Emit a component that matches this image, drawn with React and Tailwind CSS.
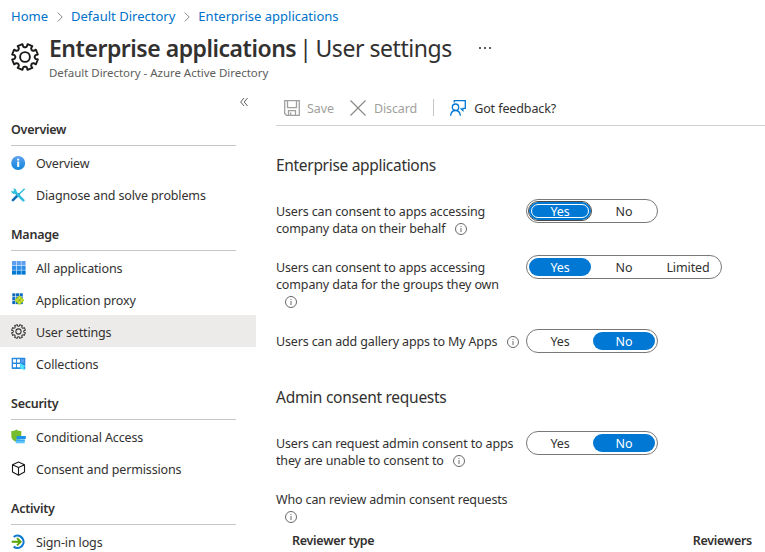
import { useId } from "react";

function Gear({ className, w }) {
  const pts = [];
  const n = 8;
  for (let i = 0; i < n; i++) {
    const c = (i * 2 * Math.PI) / n + Math.PI / 8;
    const p = (r, d) => `${(14 + r * Math.cos(c + d)).toFixed(2)},${(14 + r * Math.sin(c + d)).toFixed(2)}`;
    pts.push(p(9.7, -0.34), p(10.6, -0.22), p(13.1, -0.2), p(13.1, 0.2), p(10.6, 0.22), p(9.7, 0.34));
  }
  return (
    <svg className={className} viewBox="0 0 28 28" fill="none" stroke="currentColor" strokeWidth={w} strokeLinejoin="round">
      <polygon points={pts.join(" ")} />
      <circle cx="14" cy="14" r="4.9" />
    </svg>
  );
}

function Icon({ children }) {
  return (
    <svg className="mt-px h-4 w-4 shrink-0" viewBox="0 0 16 16" fill="none">
      {children}
    </svg>
  );
}

function OverviewIcon() {
  const id = useId();
  return (
    <Icon>
      <defs>
        <linearGradient id={id} x2="0" y2="1">
          <stop stopColor="#5ea0ef" />
          <stop offset="1" stopColor="#0f86dc" />
        </linearGradient>
      </defs>
      <circle cx="8.2" cy="8" r="7" fill={`url(#${id})`} />
      <circle cx="8.2" cy="4.7" r="1.1" fill="#fff" />
      <path d="M7.2 6.6h2v5.3h-2z" fill="#fff" />
    </Icon>
  );
}

function ToolsIcon() {
  return (
    <Icon>
      <path d="M14.6 1.8 8.2 8" stroke="#32bedd" strokeWidth="1.5" />
      <path d="M8.4 7.7 2.9 13.2" stroke="#0f6db5" strokeWidth="2.6" strokeLinecap="round" />
      <path d="M4.5 4.5 13.4 13.3" stroke="#32bedd" strokeWidth="2.6" strokeLinecap="round" />
      <path d="M1.4 3.2 3.5 5.2 5 3.7 3 1.6C5.2.9 7.2 2.7 6.4 5 5.8 6.9 3.6 7.4 2.3 6.3 1.4 5.6 1.1 4.4 1.4 3.2Z" fill="#32bedd" />
    </Icon>
  );
}

function GridIcon() {
  const rows = ["#5ea0ef", "#2f8ee6", "#0078d4"];
  return (
    <Icon>
      {rows.map((c, r) =>
        [0, 1, 2].map((k) => <rect key={`${r}${k}`} x={2 + k * 4.7} y={1 + r * 4.7} width="4.2" height="4.2" fill={c} />)
      )}
    </Icon>
  );
}

function ProxyIcon() {
  return (
    <Icon>
      {[0, 1, 2].map((r) =>
        [0, 1, 2].map((k) => <rect key={`${r}${k}`} x={2.3 + k * 3.7} y={1.3 + r * 3.8} width="3.1" height="3.2" fill="#0f6cbd" />)
      )}
      <rect x="6" y="4.7" width="7" height="7" rx="1" transform="rotate(45 9.5 8.2)" fill="#b4d21c" />
      <path d="M9.5 5v6.500M6.300 8.200h6.400" stroke="#e6f29a" strokeWidth=".5" />
      <circle cx="9.5" cy="8.2" r="1" fill="#86a81a" />
    </Icon>
  );
}

function CollectionsIcon() {
  return (
    <Icon>
      <rect x="1.7" y="1.7" width="13.6" height="11.3" rx=".6" fill="#2b88e0" />
      <path d="M3 3.3h3v3.2H3zM7 3.3h3v3.2H7zM3 8h3v3.2H3zM7 8h3v3.2H7z" fill="#fff" />
      <path d="M11 3.3h3v3.2h-3z" fill="#5ea0ef" />
      <path d="M10 6.9 15.700 10.500l-2.200.7 1.600 2.500-1.300.8-1.500-2.300-1.900 1.500z" fill="#50e6ff" />
    </Icon>
  );
}

function ShieldIcon() {
  return (
    <Icon>
      <path d="M1.300 2.100C3.400 2.100 4.900 1.400 6.300.4c1.500 1 2.800 1.700 5 1.700v4.600c0 3.300-2.500 5.200-5 6.300C3.800 11.900 1.300 10 1.300 6.700z" fill="#76bc2d" />
      <rect x="6.6" y="7" width="9.200" height="3" fill="#1b93eb" />
      <rect x="5.8" y="10.300" width="9" height="4" fill="#5fc3fa" />
      <path d="M5.800 11.400h9" stroke="#2a9ff0" strokeWidth=".8" />
    </Icon>
  );
}

function CubeIcon() {
  return (
    <Icon>
      <path d="M8.500 1 14.500 3.700v7.400L8.500 14.200l-6-3.100V3.700zM2.500 3.700l6 2.800 6-2.800M8.500 6.500v7.700" stroke="#1b1a19" strokeWidth="1.1" strokeLinejoin="round" />
    </Icon>
  );
}

function SignInIcon() {
  return (
    <Icon>
      <path d="M3.700 3A6.100 6.100 0 1 1 3.700 12.600" stroke="#0f78cf" strokeWidth="2.2" />
      <path d="M1.700 7.800h8.600M7 4.200l3.600 3.600L7 11.400" stroke="#57a300" strokeWidth="1.9" />
    </Icon>
  );
}

const sections = [
  {
    title: "Overview",
    items: [
      { label: "Overview", icon: <OverviewIcon /> },
      { label: "Diagnose and solve problems", icon: <ToolsIcon /> },
    ],
  },
  {
    title: "Manage",
    items: [
      { label: "All applications", icon: <GridIcon /> },
      { label: "Application proxy", icon: <ProxyIcon /> },
      { label: "User settings", icon: <Gear className="ml-px h-[15px] w-[15px] shrink-0" w={1.9} />, active: true },
      { label: "Collections", icon: <CollectionsIcon /> },
    ],
  },
  {
    title: "Security",
    items: [
      { label: "Conditional Access", icon: <ShieldIcon /> },
      { label: "Consent and permissions", icon: <CubeIcon /> },
    ],
  },
  { title: "Activity", items: [{ label: "Sign-in logs", icon: <SignInIcon /> }] },
];

function Sidebar() {
  return (
    <nav className="w-64 shrink-0">
      <div className="flex h-[22px] items-center justify-end pr-2 pt-[15px]">
        <svg className="h-2.5 w-2" viewBox="0 0 8 10" fill="none" stroke="#605e5c">
          <path d="M4 1 .7 5 4 9M7.5 1 4.2 5l3.3 4" />
        </svg>
      </div>
      {sections.map((s) => (
        <section key={s.title}>
          <h2 className="ml-[11px] mr-5 h-[41px] border-b border-[#c8c6c4] pt-4 text-[12.5px] leading-[18px] font-semibold tracking-[-0.25px]">{s.title}</h2>
          {s.items.map((it) => (
            <a key={it.label} className={`flex h-8 items-center pl-2.5 ${it.active ? "bg-[#edebe9]" : ""}`}>
              {it.icon}
              <span className="ml-2.5 pt-1 leading-[18px] tracking-[-0.14px]">{it.label}</span>
            </a>
          ))}
        </section>
      ))}
    </nav>
  );
}

function Info({ className = "" }) {
  return (
    <svg className={`inline-block h-3 w-3 shrink-0 ${className}`} viewBox="0 0 12 12" fill="none" stroke="#69676a">
      <circle cx="6" cy="6" r="5.5" />
      <path d="M6 5v4M6 3v1" />
    </svg>
  );
}

function Toggle({ options, value, focused }) {
  return (
    <div className="flex h-6 shrink-0 rounded-full border border-[#7a7876] p-px">
      {options.map((o) => (
        <span
          key={o}
          className={`mx-px mt-px flex h-[18px] w-[62px] items-center justify-center rounded-full ${o === value ? "bg-[#0078d4] text-white" : ""} ${
            o === value && focused ? "outline outline-[#4a4a4a]" : ""
          }`}
        >
          {o === value && focused ? (
            <span className="flex h-3.5 w-[58px] items-center justify-center rounded-full border border-white">
              <span className="pt-0.5">{o}</span>
            </span>
          ) : (
            <span className="pt-0.5">{o}</span>
          )}
        </span>
      ))}
    </div>
  );
}

function Setting({ lines, wrapInfo, className, children }) {
  return (
    <div className={`flex items-start ${className}`}>
      <div className="mt-1 w-[250px] shrink-0 leading-[17px] tracking-[-0.14px] whitespace-nowrap">
        {lines.map((l, i) => (
          <div key={l} className="flex h-[17px] items-center">
            <span>{l}</span>
            {!wrapInfo && i === lines.length - 1 && <Info className="ml-[9.5px]" />}
          </div>
        ))}
        {wrapInfo && (
          <div className="flex h-[17px] items-center pl-[9px]">
            <Info />
          </div>
        )}
      </div>
      {children}
    </div>
  );
}

function Crumb({ children }) {
  return <a className="text-[#0072c9]">{children}</a>;
}

function Sep() {
  return (
    <svg className="h-2.5 w-1.5" viewBox="0 0 6 10" fill="none" stroke="#8a8886">
      <path d="M.7.5 5.2 5 .7 9.5" />
    </svg>
  );
}

export default function App() {
  return (
    <div className="h-[552px] w-[765px] overflow-hidden bg-white font-['Noto_Sans',sans-serif] text-[12.5px] tracking-[-0.1px] text-[#323130]">
      <header className="h-[83px] whitespace-nowrap">
        <div className="flex h-8 items-center gap-[8.5px] pt-px pl-[11px] text-[13px] tracking-[0.01px]">
          <Crumb>Home</Crumb>
          <Sep />
          <Crumb>Default Directory</Crumb>
          <Sep />
          <Crumb>Enterprise applications</Crumb>
        </div>
        <div className="flex pl-[11px]">
          <Gear className="mt-[11px] h-7 w-7 text-[#1b1a19]" w={1.9} />
          <div className="ml-2.5">
            <h1 className="flex h-8 items-center text-[23px]">
              <span className="font-semibold tracking-[-0.48px]">Enterprise applications</span>
              <span className="ml-[3px] tracking-[-0.45px]">|</span>
              <span className="ml-1 tracking-[-0.45px]">User settings</span>
              <svg className="ml-[27px] h-1 w-3" viewBox="0 0 12 4" fill="#605e5c">
                <path d="M0 1h2v2H0zM5 1h2v2H5zM10 1h2v2h-2z" />
              </svg>
            </h1>
            <p className="text-[11.5px] leading-[18px] tracking-[-0.03px] text-[#605e5c]">Default Directory - Azure Active Directory</p>
          </div>
        </div>
      </header>
      <div className="flex">
        <Sidebar />
        <main className="ml-5 min-w-0 flex-1">
          <div className="flex h-[43px] items-center border-b border-[#d2d0ce] pt-[7px] pl-2 text-[#a19f9d]">
            <svg className="h-4 w-4" viewBox="0 0 16 16" fill="none" stroke="#a19f9d" strokeWidth="1.3">
              <path d="M.7.7h14.600v14.600H2.500L.7 13.500zM3.500.7v7h9v-7M4.500 15.300v-4.600h7v4.600M6.700 12.500v2.800" />
            </svg>
            <span className="ml-[7px] pt-[3px]">Save</span>
            <svg className="ml-4 h-4 w-4" viewBox="0 0 16 16" fill="none" stroke="#8a8886" strokeWidth="1.2">
              <path d="m.5.5 15 15M15.500.5l-15 15" />
            </svg>
            <span className="ml-2 pt-[3px]">Discard</span>
            <span className="ml-4 h-[17px] w-px bg-[#c8c6c4]" />
            <svg className="ml-4 h-4 w-4" viewBox="0 0 16 16" fill="none" stroke="#0078d4" strokeWidth="1.3">
              <circle cx="5.500" cy="7.200" r="3.200" />
              <path d="M.6 15.700c.3-3 2.300-5.200 4.900-5.200s4.600 2.200 4.900 5.200M4.300 2.600V.7h11v7.600h-2.400v2.300l-2.400-2.300" />
            </svg>
            <span className="ml-2 pt-[3px] text-[#323130]">Got feedback?</span>
          </div>
          <h2 className="mt-[27px] h-6 text-[15.5px] leading-6 tracking-[-0.31px]">Enterprise applications</h2>
          <Setting className="mt-[22px] h-14" lines={["Users can consent to apps accessing", "company data on their behalf"]}>
            <Toggle options={["Yes", "No"]} value="Yes" focused />
          </Setting>
          <Setting className="h-[74px]" wrapInfo lines={["Users can consent to apps accessing", "company data for the groups they own"]}>
            <Toggle options={["Yes", "No", "Limited"]} value="Yes" />
          </Setting>
          <Setting className="h-14" lines={["Users can add gallery apps to My Apps"]}>
            <Toggle options={["Yes", "No"]} value="No" />
          </Setting>
          <h2 className="h-6 text-[15.5px] leading-6 tracking-[-0.27px]">Admin consent requests</h2>
          <Setting className="mt-[22px] h-14" lines={["Users can request admin consent to apps", "they are unable to consent to"]}>
            <Toggle options={["Yes", "No"]} value="No" />
          </Setting>
          <Setting className="h-[45px]" wrapInfo lines={["Who can review admin consent requests"]} />
          <div className="flex justify-between pl-4 pr-[13px] leading-[18px] font-semibold tracking-[-0.28px]">
            <span>Reviewer type</span>
            <span>Reviewers</span>
          </div>
        </main>
      </div>
    </div>
  );
}
